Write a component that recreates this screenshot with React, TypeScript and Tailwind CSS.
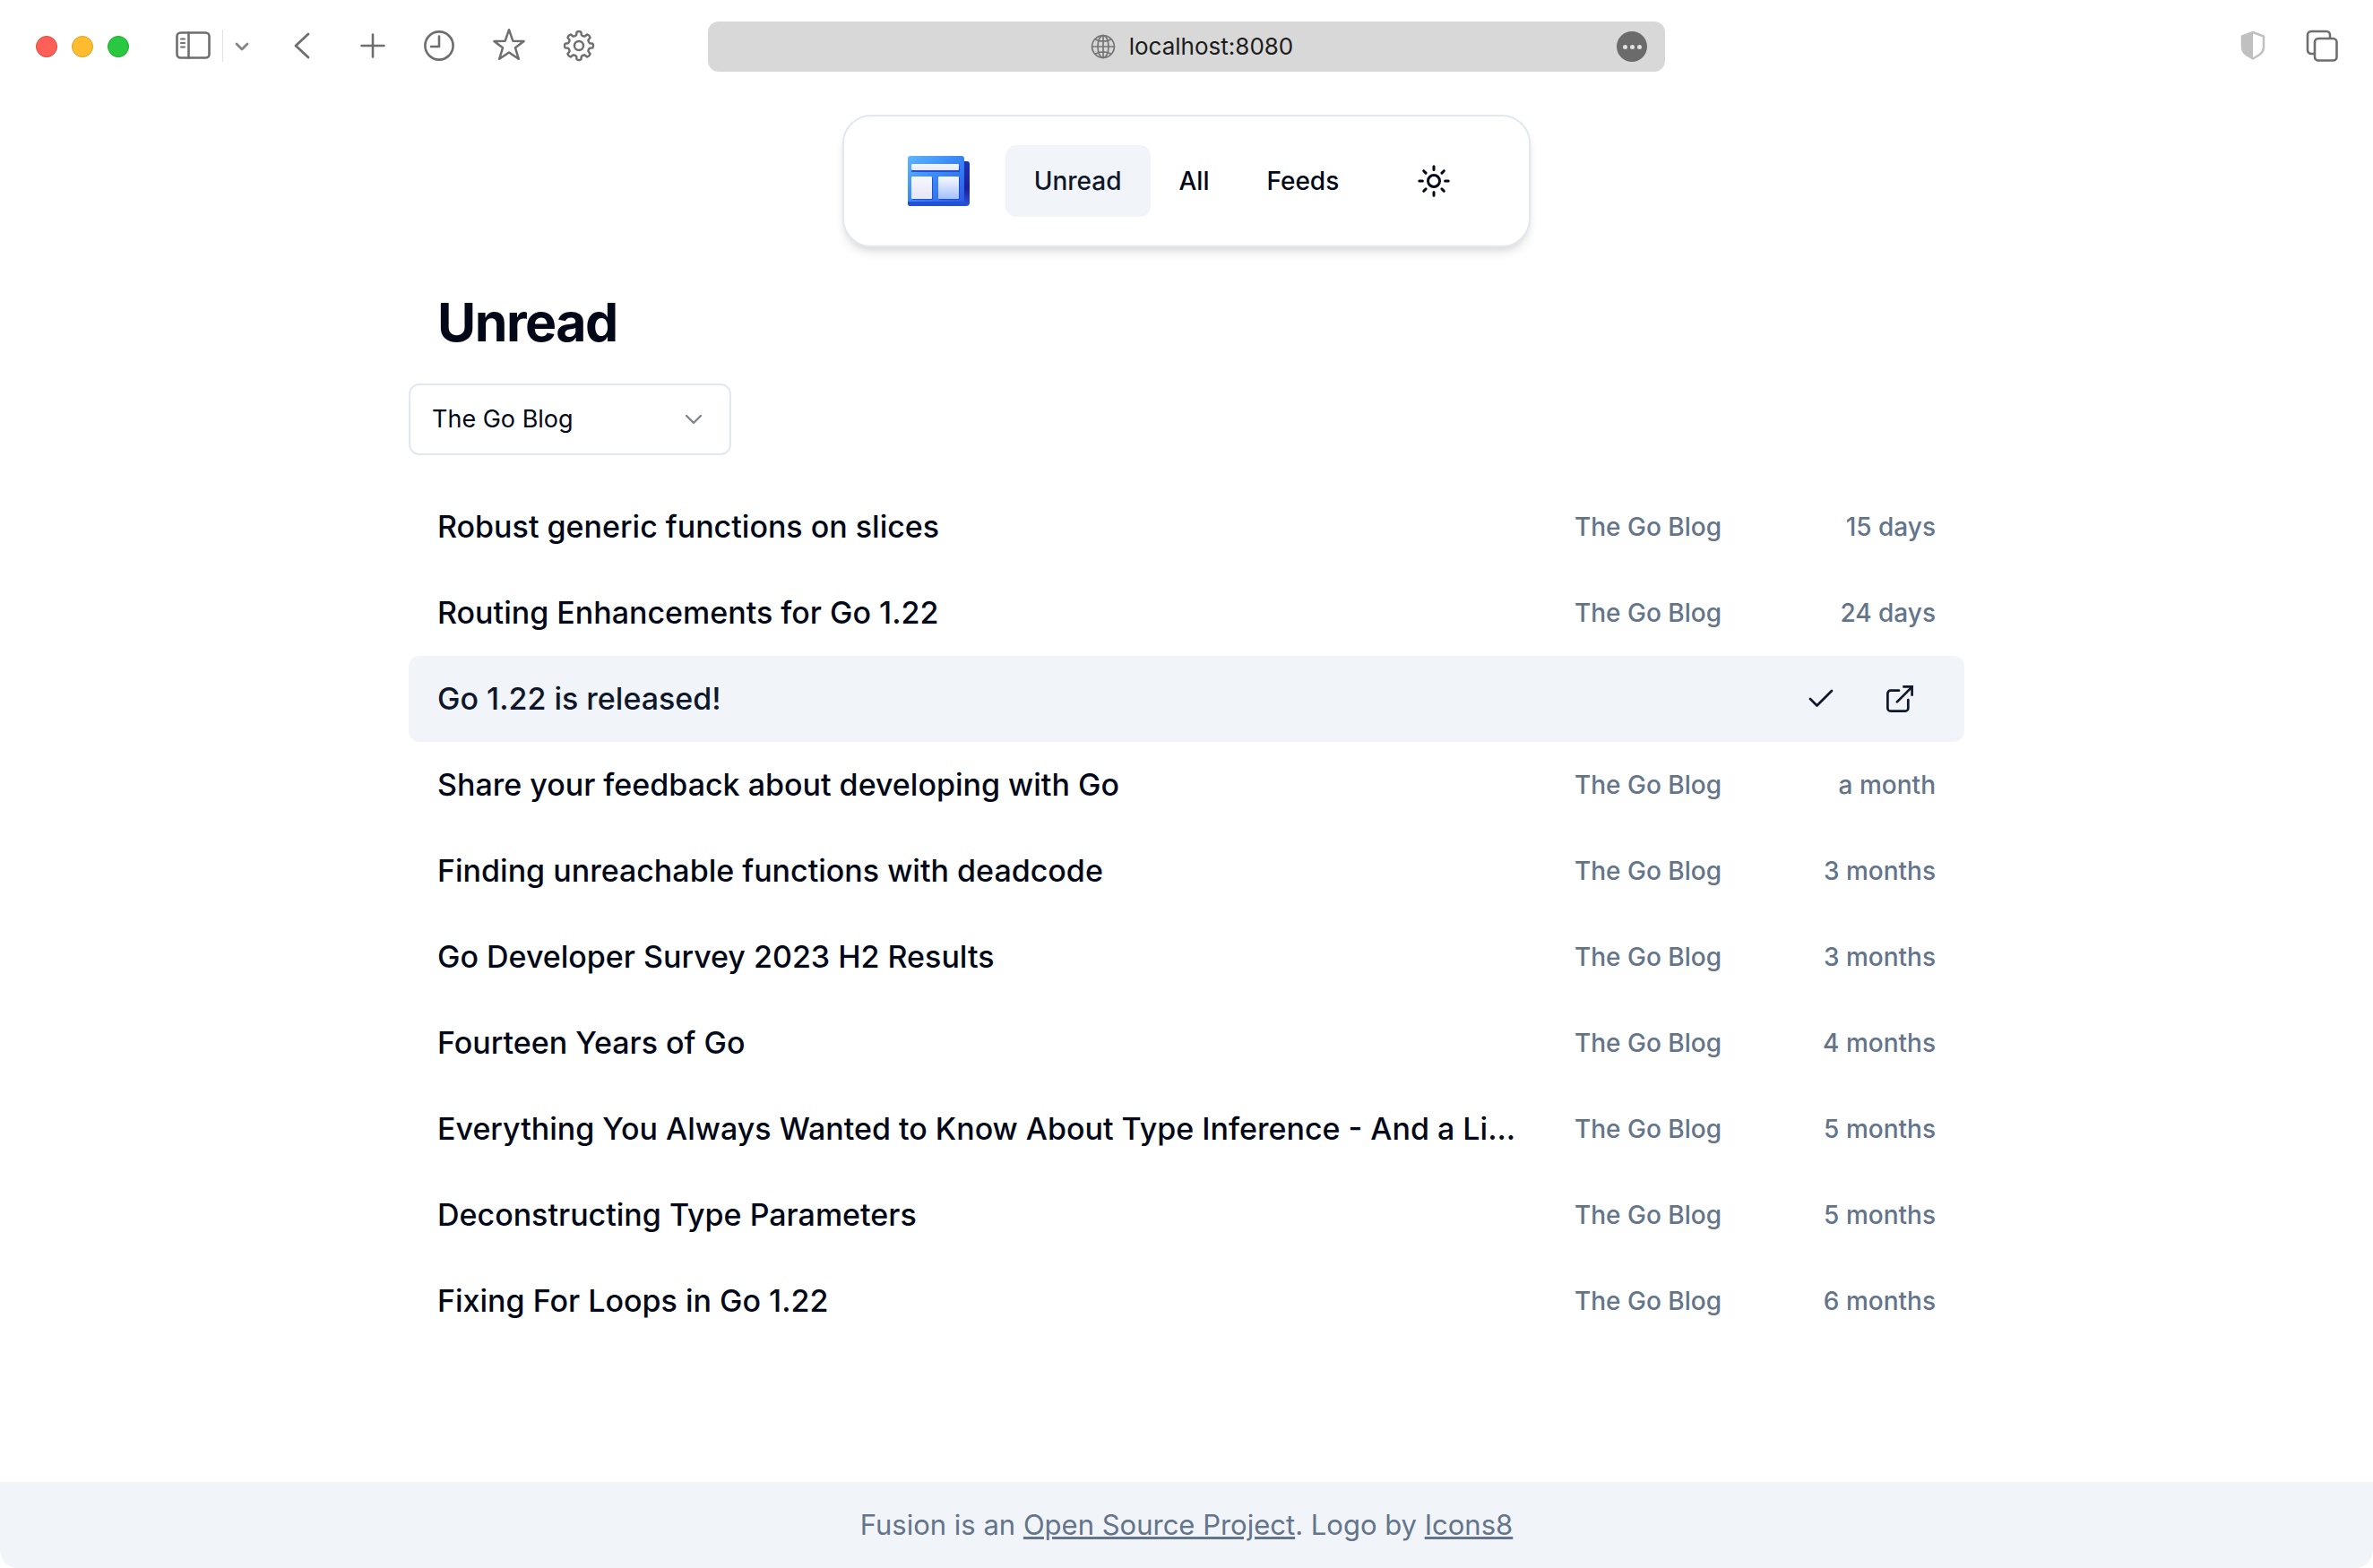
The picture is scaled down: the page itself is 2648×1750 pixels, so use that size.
import React from "react";

const line = { fill: "none", strokeLinecap: "round" as const, strokeLinejoin: "round" as const };

const gearPath = (() => {
  const pts: string[] = [];
  const n = 8;
  const polar = (r: number, deg: number) => {
    const a = ((deg - 90) * Math.PI) / 180;
    return `${(r * Math.cos(a)).toFixed(2)} ${(r * Math.sin(a)).toFixed(2)}`;
  };
  for (let i = 0; i < n; i++) {
    const c = (360 / n) * i;
    pts.push(`${i === 0 ? "M" : "L"}${polar(12.4, c - 13)}`);
    pts.push(`L${polar(15.5, c - 9)}`);
    pts.push(`Q${polar(16.7, c)} ${polar(15.5, c + 9)}`);
    pts.push(`L${polar(12.4, c + 13)}`);
    pts.push(`Q${polar(11, c + 22.5)} ${polar(12.4, c + 32)}`);
  }
  return pts.join("") + "Z";
})();

function SidebarIcon() {
  return (
    <svg width="40" height="32" viewBox="0 0 40 32" stroke="#6e6e6e" strokeWidth="2.6" {...line}>
      <rect x="1.5" y="1.5" width="36" height="28" rx="4" />
      <path d="M14.500 1.5v28" />
      <path d="M6 8.5h4M6 13h4M6 17.5h4" strokeWidth="2" />
    </svg>
  );
}

function GlobeIcon() {
  return (
    <svg width="28" height="28" viewBox="0 0 28 28" stroke="#757575" strokeWidth="1.7" {...line}>
      <circle cx="14" cy="14" r="12.4" />
      <ellipse cx="14" cy="14" rx="6" ry="12.4" />
      <path d="M14 1.6v24.8M1.6 14h24.8M5 5.8c5 3.2 13 3.2 18 0M5 22.2c5-3.2 13-3.2 18 0" />
    </svg>
  );
}

function Logo() {
  return (
    <svg width="80" height="80" viewBox="-2 0 80 80">
      <defs>
        <linearGradient id="face" x1="0" y1="0" x2="1" y2="1">
          <stop offset="0" stopColor="#5cb8ff" />
          <stop offset="0.45" stopColor="#3a8af8" />
          <stop offset="1" stopColor="#2a55e0" />
        </linearGradient>
        <linearGradient id="side" x1="0" y1="0" x2="0" y2="1">
          <stop offset="0" stopColor="#1c34b4" />
          <stop offset="0.6" stopColor="#1a1f9c" />
          <stop offset="1" stopColor="#2a55d8" />
        </linearGradient>
        <linearGradient id="panel" x1="0" y1="0" x2="0" y2="1">
          <stop offset="0" stopColor="#f8f7ff" />
          <stop offset="1" stopColor="#e4e6f6" />
        </linearGradient>
        <linearGradient id="tint" x1="0" y1="0" x2="0" y2="1">
          <stop offset="0" stopColor="#fafaff" />
          <stop offset="1" stopColor="#a3c0fb" />
        </linearGradient>
      </defs>
      <path d="M64 18h5a3 3 0 0 1 3 3v43a4 4 0 0 1-4 4h-8z" fill="url(#side)" />
      <rect x="3" y="12" width="63" height="56" rx="3" fill="url(#face)" />
      <path d="M3 63h62l3 1-2 4H6a3 3 0 0 1-3-3z" fill="#2450d6" />
      <rect x="7" y="23" width="54" height="7" rx="1" fill="#1f4fd0" />
      <rect x="8" y="36" width="23" height="25" rx="1" fill="#1f4fd0" />
      <rect x="38" y="36" width="23" height="25" rx="1" fill="#1f4fd0" />
      <rect x="7" y="21" width="53" height="7" rx="1" fill="url(#panel)" />
      <rect x="7" y="35" width="23" height="25" rx="1" fill="url(#panel)" />
      <rect x="37" y="35" width="23" height="25" rx="1" fill="url(#tint)" />
    </svg>
  );
}

function SunIcon() {
  return (
    <svg width="40" height="40" viewBox="-20 -20 40 40" stroke="#020817" strokeWidth="3" {...line}>
      <circle r="6.5" />
      <path d="M0-16.2v3.6M0 16.2v-3.6M-16.2 0h3.6M16.2 0h-3.6M-11.3-11.3l2.4 2.4M11.3-11.3l-2.4 2.4M-11.3 11.3l2.4-2.4M11.3 11.3l-2.4-2.4" />
    </svg>
  );
}

function Toolbar() {
  return (
    <header className="grid h-26 grid-cols-[1fr_minmax(0,1068px)_1fr] items-center">
      <div className="flex items-center pl-10">
        <div className="flex gap-4">
          <button aria-label="Close" className="size-6 rounded-full border border-[#e0443e] bg-[#ff5f57]" />
          <button aria-label="Minimize" className="size-6 rounded-full border border-[#dea123] bg-[#febc2e]" />
          <button aria-label="Zoom" className="size-6 rounded-full border border-[#1aab29] bg-[#28c840]" />
        </div>
        <div className="flex items-center pb-0.5 pl-13">
          <button aria-label="Sidebar">
            <SidebarIcon />
          </button>
          <span className="ml-3 h-9 w-px bg-[#e2e2e2]" />
          <button aria-label="Sidebar menu" className="ml-3">
            <svg width="18" height="18" viewBox="0 0 18 18" stroke="#858585" strokeWidth="2.8" {...line}>
              <path d="M3 7l6 6 6-6" />
            </svg>
          </button>
          <button aria-label="Back" className="ml-12">
            <svg width="20" height="32" viewBox="0 0 20 32" stroke="#6e6e6e" strokeWidth="2.8" {...line}>
              <path d="M17 3L3 16L17 29" />
            </svg>
          </button>
          <div className="flex items-center gap-[41px] pl-[54px]">
            <button aria-label="New tab">
              <svg width="30" height="30" viewBox="0 0 30 30" stroke="#6e6e6e" strokeWidth="2.6" {...line}>
                <path d="M15 2.500v25M2.500 15h25" />
              </svg>
            </button>
            <button aria-label="History">
              <svg width="36" height="36" viewBox="0 0 36 36" stroke="#6e6e6e" strokeWidth="2.6" {...line}>
                <circle cx="18" cy="18" r="15.600" />
                <path d="M18 7.500v11.500h-9" />
              </svg>
            </button>
            <button aria-label="Bookmarks">
              <svg width="38" height="40" viewBox="1 0 38 40" stroke="#6e6e6e" strokeWidth="2.5" {...line}>
                <path d="M20 2.200L24.300 14.700L36.600 15L27 22.300L30.800 34.800L20 27.500L9.200 34.800L13 22.300L3.400 15L15.700 14.700Z" />
              </svg>
            </button>
            <button aria-label="Settings">
              <svg width="36" height="36" viewBox="-18 -18 36 36" stroke="#6e6e6e" strokeWidth="2.4" {...line}>
                <path d={gearPath} />
                <circle r="5" />
              </svg>
            </button>
          </div>
        </div>
      </div>
      <div className="flex h-14 items-center rounded-xl bg-[#d8d8d8] pr-5 pl-[66px]">
        <div className="flex flex-1 items-center justify-center gap-[15px]">
          <GlobeIcon />
          <input
            aria-label="Address"
            defaultValue="localhost:8080"
            className="field-sizing-content bg-transparent text-[26px] leading-8 text-[#1c1c1c] outline-none"
          />
        </div>
        <button aria-label="Page menu" className="flex size-[34px] items-center justify-center gap-[3px] rounded-full bg-[#6b6b6b]">
          <span className="size-[5px] rounded-full bg-[#e0e0e0]" />
          <span className="size-[5px] rounded-full bg-[#e0e0e0]" />
          <span className="size-[5px] rounded-full bg-[#e0e0e0]" />
        </button>
      </div>
      <div className="flex items-center justify-end gap-11 pr-[38px] pb-0.5">
        <button aria-label="Privacy report">
          <svg width="30" height="36" viewBox="0 0 30 36">
            <path d="M15 3L27 7.500V20c0 5.500-5 8.500-12 12.500C8 28.500 3 25.500 3 20V7.500z" fill="none" stroke="#c0c0c0" strokeWidth="2.500" strokeLinejoin="round" />
            <path d="M15 3v29.500C8 28.500 3 25.500 3 20V7.500z" fill="#c0c0c0" />
          </svg>
        </button>
        <button aria-label="Tab overview">
          <svg width="37" height="37" viewBox="0 0 37 37" stroke="#6e6e6e" strokeWidth="2.600" {...line}>
            <path d="M9.500 27H6a4 4 0 0 1-4-4V6a4 4 0 0 1 4-4h17a4 4 0 0 1 4 4v3.500" />
            <rect x="10" y="10" width="24.500" height="24.500" rx="4" />
          </svg>
        </button>
      </div>
    </header>
  );
}

const navLink = "flex h-20 items-center rounded-xl px-8 text-[28px] leading-10 font-medium";

function NavBar() {
  return (
    <nav className="mx-auto flex h-37 w-full max-w-3xl items-center justify-between rounded-[32px] border-2 border-[#e2e8f0] bg-white px-[66px] shadow-[0_8px_12px_-2px_rgba(0,0,0,0.1),0_4px_8px_-4px_rgba(0,0,0,0.1)]">
      <a href="#home" aria-label="Home">
        <Logo />
      </a>
      <div className="flex">
        <a href="#unread" className={`${navLink} bg-[#f1f5f9] text-[#0f172a]`}>Unread</a>
        <a href="#all" className={`${navLink} text-[#020817]`}>All</a>
        <a href="#feeds" className={`${navLink} text-[#020817]`}>Feeds</a>
      </div>
      <button aria-label="Toggle theme" className="flex size-20 items-center justify-center">
        <SunIcon />
      </button>
    </nav>
  );
}

const articles = [
  { title: "Robust generic functions on slices", age: "15 days" },
  { title: "Routing Enhancements for Go 1.22", age: "24 days" },
  { title: "Go 1.22 is released!", age: "", active: true },
  { title: "Share your feedback about developing with Go", age: "a month" },
  { title: "Finding unreachable functions with deadcode", age: "3 months" },
  { title: "Go Developer Survey 2023 H2 Results", age: "3 months" },
  { title: "Fourteen Years of Go", age: "4 months" },
  { title: "Everything You Always Wanted to Know About Type Inference - And a Li...", age: "5 months" },
  { title: "Deconstructing Type Parameters", age: "5 months" },
  { title: "Fixing For Loops in Go 1.22", age: "6 months" },
];

function ArticleRow({ title, age, active }: { title: string; age: string; active?: boolean }) {
  return (
    <li className={`flex h-24 items-center gap-12 rounded-xl px-8 ${active ? "bg-[#f1f5f9] text-[#0f172a]" : "text-[#020817]"}`}>
      <a href="#article" className="min-w-0 flex-1 truncate text-[34px] leading-[56px] font-medium">
        {title}
      </a>
      {active ? (
        <div className="flex">
          <button aria-label="Mark as read" className="flex h-20 w-24 items-center justify-center">
            <svg width="36" height="36" viewBox="0 0 24 24" stroke="#0f172a" strokeWidth="1.8" {...line}>
              <path d="M20 6 9 17l-5-5" />
            </svg>
          </button>
          <a href="#original" aria-label="Open original" className="flex h-20 w-20 items-center justify-center">
            <svg width="30" height="30" viewBox="0 0 30 30" fill="none" stroke="#0f172a" strokeWidth="2.700">
              <path d="M18.300 1.400H28.600V11.700" />
              <path d="M11.900 18.400L28.600 1.600M14 5.700H4.600a3.200 3.200 0 0 0-3.200 3.200v16.500a3.200 3.200 0 0 0 3.200 3.200h16.500a3.200 3.200 0 0 0 3.200-3.200V16" strokeLinecap="round" />
            </svg>
          </a>
        </div>
      ) : (
        <div className="flex w-[403px] justify-between text-[28px] leading-10 font-medium text-[#64748b]">
          <span>The Go Blog</span>
          <span>{age}</span>
        </div>
      )}
    </li>
  );
}

export default function App() {
  return (
    <div className="flex min-h-screen flex-col bg-white font-['Inter',sans-serif]">
      <Toolbar />
      <main className="mx-auto w-full max-w-[1736px] pt-6 pb-16">
        <NavBar />
        <h1 className="mt-[54px] mb-[38px] px-8 text-[59px] leading-[60px] font-bold tracking-tight text-[#020817]">Unread</h1>
        <div className="relative w-[360px]">
          <select
            aria-label="Feed"
            className="h-20 w-full appearance-none rounded-xl border-2 border-[#e2e8f0] bg-white px-6 text-[27px] leading-10 text-[#020817]"
          >
            <option>The Go Blog</option>
          </select>
          <svg className="pointer-events-none absolute top-6 right-[26px]" width="32" height="32" viewBox="0 0 32 32" stroke="#81848c" strokeWidth="2.4" {...line}>
            <path d="M8 12l8 8 8-8" />
          </svg>
        </div>
        <ul className="mt-8">
          {articles.map((a) => (
            <ArticleRow key={a.title} {...a} />
          ))}
        </ul>
      </main>
      <footer className="mt-auto flex h-24 items-center justify-center rounded-b-[20px] bg-[#f1f5f9] text-[31px] leading-10 text-[#64748b]">
        <p>
          Fusion is an{" "}
          <a href="#source" className="underline">Open Source Project</a>. Logo by{" "}
          <a href="#icons8" className="underline">Icons8</a>
        </p>
      </footer>
    </div>
  );
}
